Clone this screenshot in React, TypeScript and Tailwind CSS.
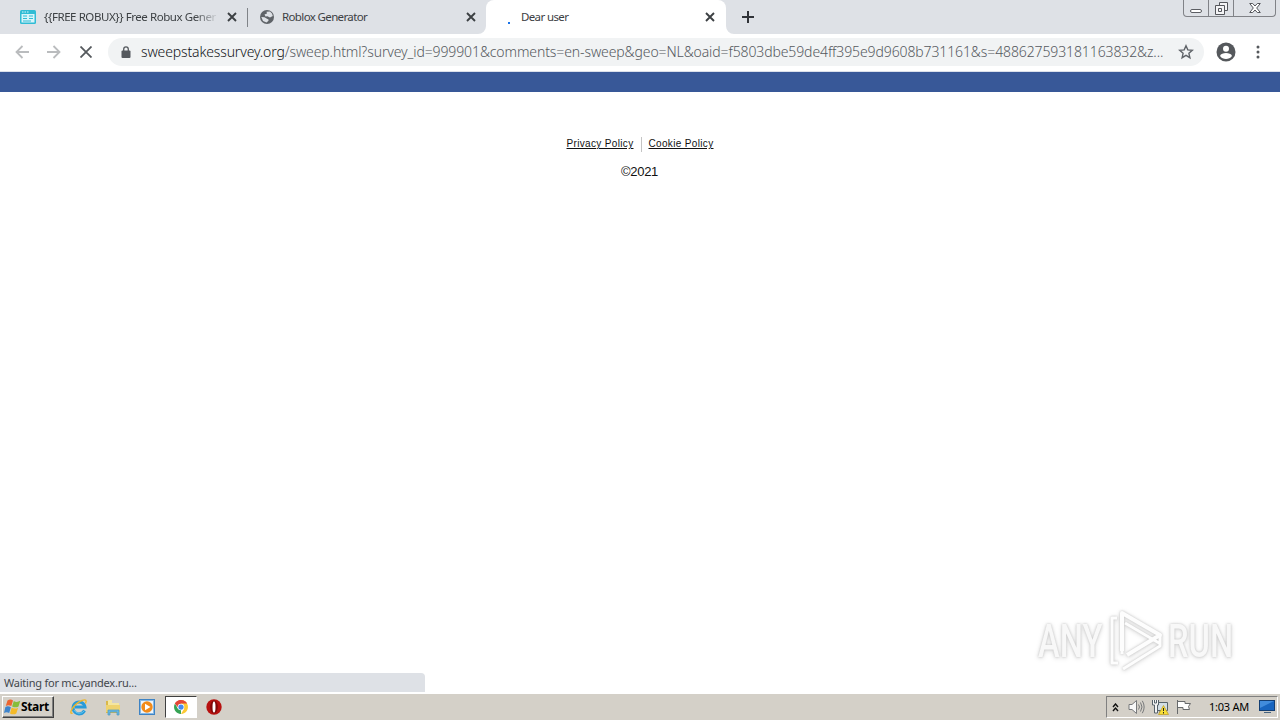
import React from "react";

const ui = "font-['Noto_Sans','DejaVu_Sans',sans-serif]";

function CloseIcon({ className = "" }: { className?: string }) {
  return (
    <svg className={className} width="10" height="10" viewBox="0 0 10 10" stroke="#3c4043" strokeWidth="1.9">
      <path d="M1 1l8 8M9 1L1 9" />
    </svg>
  );
}

function TabStrip() {
  return (
    <div className="flex h-[34px] bg-[#dee1e6] text-[#3c4043]">
      <div className="flex w-[247px] items-center pl-5">
        <svg width="16" height="14" viewBox="0 0 16 14" className="shrink-0">
          <rect width="16" height="14" rx="1.5" fill="#30bcd5" />
          <path d="M1.5 4h13v8.500h-13z" fill="#d9f5fa" />
          <path d="M2 2h1.5M4.5 2H6M7 2h1.5" stroke="#d9f5fa" />
          <path d="M3 6h4M3 8.500h4M3 11h8M9 6h4M9 8.500h4" stroke="#30bcd5" strokeWidth="1.2" />
        </svg>
        <div className="ml-2 w-[175px] overflow-hidden text-[11.5px] tracking-[-0.43px] whitespace-nowrap [mask-image:linear-gradient(to_right,black_86%,transparent)]">
          {"{{FREE ROBUX}} Free Robux Gener"}
        </div>
        <CloseIcon className="ml-2 shrink-0" />
      </div>
      <div className="mt-[8px] h-[19px] w-px bg-[#808388]" />
      <div className="flex w-[238px] items-center pl-[11px]">
        <svg width="16" height="16" viewBox="0 0 16 16">
          <circle cx="8" cy="8" r="7" fill="#5f6368" />
          <path d="M7.500 2.800L11 2.500q2.500 1.500 2.800 4.500L11 8.500 8.500 7.200 6.500 7.500 5.500 5.500 8 4.500z" fill="#dee1e6" />
          <path d="M2.300 8l3.200.2 2.500 1.600 1.500.7v1.300L7.500 13.500 4 12z" fill="#dee1e6" />
        </svg>
        <span className="ml-[7px] w-[184px] text-[11.5px] tracking-[-0.63px] whitespace-nowrap">Roblox Generator</span>
        <CloseIcon />
      </div>
      <div className="relative flex w-[240px] items-center rounded-t-lg bg-white pl-[22px]">
        <svg className="absolute bottom-0 -left-2" width="8" height="8"><path d="M8 0v8H0a8 8 0 0 0 8-8" fill="white" /></svg>
        <svg className="absolute -right-2 bottom-0" width="8" height="8"><path d="M0 0v8h8a8 8 0 0 1-8-8" fill="white" /></svg>
        <span className="mt-[12px] h-[2px] w-[2px] bg-[#1a73e8]" />
        <span className="ml-[11px] w-[184px] text-[11.5px] tracking-[-0.63px]">Dear user</span>
        <CloseIcon />
      </div>
      <svg className="mt-[11px] ml-[16px]" width="12" height="12" stroke="#303338" strokeWidth="2"><path d="M6 0v12M0 6h12" /></svg>
      <div className="ml-auto flex h-[17px] w-[93px] rounded-b border border-t-0 border-[#808287]">
        <div className="flex w-[25px] items-end justify-center border-r border-[#808287] pb-[3px]">
          <div className="h-[4px] w-[12px] rounded-sm border border-[#5c5e63] bg-white" />
        </div>
        <div className="flex w-[25px] justify-center border-r border-[#808287] pt-[2px]">
          <svg width="13" height="13" fill="#f4f4f6" stroke="#55575c"><path d="M4.500 .5h8v8h-8z" /><path d="M.5 3.500h9v9h-9z" /><path d="M3.500 6.500h3v3h-3z" /></svg>
        </div>
        <div className="flex flex-1 justify-center pt-[3px]">
          <svg width="12" height="10" fill="#fff" stroke="#55575c" strokeWidth="1"><path d="M.7.5h3L6 3 8.300.5h3L7.700 5l3.600 4.500h-3L6 7 3.700 9.500h-3L4.300 5z" /></svg>
        </div>
      </div>
      <div className="w-[4px]" />
    </div>
  );
}

function Toolbar() {
  return (
    <div className="flex h-[38px] items-center border-b border-[#dbe0ea] bg-white pb-px pl-[15px]">
      <svg width="14" height="14" viewBox="0 0 14 14" fill="none" stroke="#babcbe" strokeWidth="1.8"><path d="M14 7H1.500M7.500 1l-6 6 6 6" /></svg>
      <svg className="ml-[18px]" width="14" height="14" viewBox="0 0 14 14" fill="none" stroke="#babcbe" strokeWidth="1.8"><path d="M0 7h12.500M6.500 1l6 6-6 6" /></svg>
      <svg className="ml-[19px]" width="12" height="12" stroke="#55595d" strokeWidth="1.8"><path d="M.5.5l11 11M11.500.5l-11 11" /></svg>
      <div className="ml-[16px] flex h-7 w-[1096px] items-center rounded-full bg-[#f1f3f4] pl-[13px]">
        <svg width="10" height="13" viewBox="0 0 10 13"><rect y="4.500" x=".5" width="9" height="7.500" rx="1" fill="#55595e" /><path d="M2.700 5V3.200a2.300 2.300 0 0 1 4.600 0V5" fill="none" stroke="#55595e" strokeWidth="1.300" /></svg>
        <div className="mb-px ml-[10px] w-[1038px] text-[14px] font-light tracking-[-0.11px] whitespace-nowrap text-[#55595e]">
          <span className="tracking-[-0.14px] text-[#111418]">sweepstakessurvey.org</span>
          <span>/sweep.html?survey_id=999901&amp;comments=en-sweep&amp;geo=NL&amp;oaid=f5803dbe59de4ff395e9d9608b731161&amp;s=488627593181163832&amp;z...</span>
        </div>
        <svg className="-ml-px shrink-0" width="16" height="16" viewBox="0 0 16 16" fill="none" stroke="#5f6368" strokeWidth="1.400"><path d="M8 1.800l1.800 4.100 4.500.4-3.400 3 1 4.400L8 11.400l-3.900 2.300 1-4.400-3.400-3 4.500-.4z" /></svg>
      </div>
      <svg className="ml-[12px]" width="20" height="20" viewBox="0 0 20 20"><circle cx="10" cy="10" r="9.500" fill="#55585c" /><circle cx="10" cy="6.700" r="3" fill="#fff" /><path d="M4 14c.6-2.300 3.500-3 6-3s5.400.7 6 3a7.500 7.500 0 0 1-12 0" fill="#fff" /></svg>
      <svg className="ml-[20px]" width="4" height="14" fill="#55585c"><circle cx="2" cy="2" r="1.500" /><circle cx="2" cy="7" r="1.500" /><circle cx="2" cy="12" r="1.500" /></svg>
    </div>
  );
}

function Watermark() {
  return (
    <div className="absolute right-[44px] bottom-[20px] flex h-[66px] w-[200px] items-center justify-center font-['Roboto',sans-serif] text-[46px] font-medium text-[#f8f8f8] [filter:drop-shadow(0_0_1px_#c6c6c6)_drop-shadow(0_1px_2px_#dddddd)]">
      <span className="w-[67px]"><span className="inline-block origin-left scale-x-[0.71]">ANY</span></span>
      <svg className="shrink-0" width="60" height="64" viewBox="0 0 60 64" fill="none" stroke="#fdfdfd" strokeWidth="4" strokeLinejoin="round">
        <path d="M17 42V4l38 22-33 20" />
        <path d="M12 9H7v45h6M17 9v36M20 14l34 20M18 60l37-23V26" strokeWidth="3" />
      </svg>
      <span className="w-[69px]"><span className="ml-[3px] inline-block origin-left scale-x-[0.71]">RUN</span></span>
    </div>
  );
}

function Page() {
  return (
    <div className="relative flex h-[622px] flex-col items-center bg-white font-['Liberation_Sans',sans-serif] text-[#111]">
      <div className="h-5 w-full shrink-0 bg-[#385898]" />
      <div className="mt-[44px] flex h-[16px] items-center text-[10px] leading-[14px]">
        <a className="w-[67px] tracking-[0.34px] whitespace-nowrap underline">Privacy Policy</a>
        <div className="ml-[7px] h-[15px] w-px bg-[#c4c4c4]" />
        <a className="ml-[7px] w-[65px] tracking-[0.34px] whitespace-nowrap underline">Cookie Policy</a>
      </div>
      <div className="mt-[12px] mr-[1px] text-[13px] leading-4 tracking-[-0.3px]">©2021</div>
      <Watermark />
      <div className={`absolute bottom-[2px] left-0 flex h-[19px] w-[425px] items-center rounded-tr bg-[#dee1e6] pt-[2px] pl-1 text-[11px] tracking-[-0.23px] text-[#42464b] ${ui}`}>
        Waiting for mc.yandex.ru...
      </div>
    </div>
  );
}

function Taskbar() {
  return (
    <div className="flex h-[26px] items-center bg-[#d4d0c8] pl-[2px] text-black">
      <div className="flex h-[22px] w-[52px] items-center border border-t-white border-r-[#404040] border-b-[#404040] border-l-white pl-px shadow-[inset_-1px_-1px_#808080]">
        <svg width="17" height="16" viewBox="0 0 17 16">
          <path d="M3.500 1.500q3-2 5.500 0L7.300 7Q4.300 5.500 1.800 7z" fill="#ed6530" />
          <path d="M9.800 2q3 2 6.500-.2L14.500 7.500q-3 1.700-6.400 0z" fill="#86bd3a" />
          <path d="M1.400 8Q4 6.500 6.900 8.300L5.200 14Q2.500 12.500 0 14z" fill="#3e84cc" />
          <path d="M7.700 8.500q3 2 6.400.2L12.300 14.500q-3 1.700-6.300 0z" fill="#f4ba28" />
        </svg>
        <span className="font-['Noto_Sans',sans-serif] text-[12px] font-bold tracking-[-0.35px]">Start</span>
      </div>
      <svg className="ml-[16px]" width="18" height="18" viewBox="0 0 18 18" fill="none">
        <path d="M14.500 12.500A6 6 0 1 1 15 9H5" stroke="#299bd9" strokeWidth="3" />
        <path d="M14.500 12.500A6 6 0 0 1 4 12" stroke="#61c6ee" />
        <path d="M2.500 15C-2 17 3 6 12 2.500c4-1.500 5 0 3.500 3" stroke="#edb62c" strokeWidth="1.400" />
      </svg>
      <svg className="ml-[17px]" width="16" height="17" viewBox="0 0 16 17">
        <path d="M1 2h5l1 2h7v10H1z" fill="#d9b84a" /><path d="M3 1h4v3h7v8H3z" fill="#f4e6a0" />
        <path d="M1 6h14v7H1z" fill="#efd36e" /><path d="M3 16v-5h11v5h-2v-3H5v3z" fill="#69b7df" stroke="#4a98c2" strokeWidth=".7" />
      </svg>
      <svg className="ml-[18px]" width="16" height="16" viewBox="0 0 16 16">
        <rect x=".5" y=".5" width="15" height="15" fill="#86b9e5" stroke="#3d83c4" /><rect x="2" y="2" width="12" height="12" fill="#eef5fb" />
        <circle cx="8" cy="8" r="5.700" fill="#f28b19" /><path d="M6 4.700v6.600L11.500 8z" fill="#fff" />
      </svg>
      <div className="ml-[10px] flex h-[22px] w-[32px] items-center justify-center border border-t-[#404040] border-r-white border-b-white border-l-[#404040] bg-white">
        <svg width="14" height="14" viewBox="0 0 16 16">
          <path d="M8 8L1.100 4A8 8 0 0 1 14.900 4z" fill="#e44637" /><path d="M8 8V0a8 8 0 0 1 6.900 4A8 8 0 0 1 8 16l3.500-6z" fill="#fcc934" />
          <path d="M1.100 4L4.500 10 8 11.500V16A8 8 0 0 1 1.100 4" fill="#36a354" /><path d="M1.100 4A8 8 0 0 1 14.900 4H8L4 8z" fill="#e44637" />
          <circle cx="8" cy="8" r="3.800" fill="#fff" /><circle cx="8" cy="8" r="3" fill="#458af0" />
        </svg>
      </div>
      <svg className="ml-[9px]" width="16" height="16" viewBox="0 0 16 16"><circle cx="8" cy="8" r="7.700" fill="#b7100e" /><ellipse cx="8" cy="8" rx="3.800" ry="6.500" fill="#7f0808" /><ellipse cx="8" cy="8" rx="1.500" ry="5.500" fill="#fff" /></svg>
      <div className="ml-auto flex h-[22px] w-[172px] items-center border border-t-[#808080] border-r-white border-b-white border-l-[#808080] pl-[5px]">
        <svg width="7" height="9" fill="none" stroke="#111" strokeWidth="1.400"><path d="M1 4l2.500-3L6 4M1 8l2.500-3L6 8" /></svg>
        <svg className="ml-[9px]" width="17" height="16" viewBox="0 0 17 16" fill="none" stroke="#77797b"><path d="M1 5.500h3L8.500 1.500v13L4 10.500H1z" fill="#f8f8f8" /><path d="M10.500 5.500q2 2.500 0 5M12.500 3.500q3 4.500 0 9M14.300 1.800q3.700 6.200 0 12.400" /></svg>
        <svg className="ml-[7px]" width="17" height="16" viewBox="0 0 17 16"><path d="M5.500 3.500h10v8h-10z" fill="#d3dee5" stroke="#57636b" /><path d="M7 13h8M10.500 11v2" stroke="#57636b" /><path d="M.5 1v5h2v8h3V6h1V1M2.500 1v3h2V1" fill="#f5f5f5" stroke="#57636b" /><path d="M11.500 6.500l5 9h-10z" fill="#f8df37" stroke="#bb991f" strokeWidth=".7" /><path d="M11.500 9v3M11.500 13v1.500" stroke="#222" /></svg>
        <svg className="ml-[7px]" width="16" height="16" viewBox="0 0 16 16" fill="#fff" stroke="#686a6c"><path d="M1.500 1v14M2 2.500h7v2h5.500l-2 3 1 3H7v-2H2" /></svg>
        <span className={`ml-[17px] w-[50px] text-[11px] tracking-[-0.25px] whitespace-nowrap ${ui}`}>1:03 AM</span>
        <svg width="16" height="14" viewBox="0 0 16 14"><rect x=".5" y=".5" width="15" height="10" fill="#1865bf" stroke="#143f73" /><path d="M1 1h14L1 8z" fill="#418cdc" /><path d="M5 12.500h7" stroke="#45627e" /></svg>
      </div>
      <div className="w-[2px]" />
    </div>
  );
}

export default function App() {
  return (
    <div className={`h-[720px] w-[1280px] overflow-hidden bg-white ${ui}`}>
      <TabStrip />
      <Toolbar />
      <Page />
      <Taskbar />
    </div>
  );
}
